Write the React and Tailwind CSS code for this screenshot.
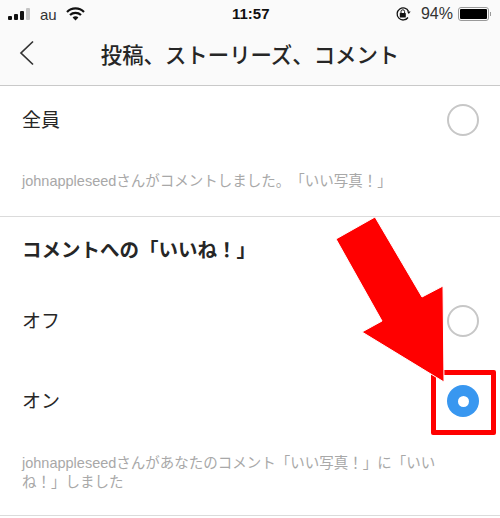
import React from 'react';

const jp = 'font-["Liberation_Sans","Noto_Sans_CJK_JP",sans-serif] [text-spacing-trim:space-all]';

function Radio({ checked }) {
  if (checked) {
    return (
      <div className="flex h-8 w-8 items-center justify-center rounded-full bg-[#3897f0]">
        <div className="h-[11px] w-[11px] rounded-full bg-white" />
      </div>
    );
  }
  return <div className="h-8 w-8 rounded-full border-2 border-[#c7c7c7]" />;
}

function Row({ label, checked, className }) {
  return (
    <div className={`flex items-center justify-between pl-[22px] pr-[21px] ${className}`}>
      <span className="pt-[2px] text-[19px] leading-[24px] text-[#262626]">{label}</span>
      <Radio checked={checked} />
    </div>
  );
}

function StatusBar() {
  return (
    <div className="relative flex h-[27px] items-center justify-between pl-2 pr-[9px] pt-[1px] text-[#111]">
      <div className="flex items-center">
        <div className="flex items-end gap-[2px]">
          <div className="h-[4px] w-[4px] rounded-[1px] bg-[#111]" />
          <div className="h-[6px] w-[4px] rounded-[1px] bg-[#111]" />
          <div className="h-[9px] w-[4px] rounded-[1px] bg-[#111]" />
          <div className="h-[12px] w-[4px] rounded-[1px] bg-[#c4c4c4]" />
        </div>
        <span className="ml-[10px] text-[15px] leading-none text-[#333]">au</span>
        <svg className="ml-[9px]" width="19" height="14" viewBox="0 0 19 14">
          <path d="M1 5 A12 12 0 0 1 18 5" fill="none" stroke="#111" strokeWidth="2.2" />
          <path d="M4 8 A8 8 0 0 1 15 8" fill="none" stroke="#111" strokeWidth="2.2" />
          <path d="M6.6 10.6 A4 4 0 0 1 12.4 10.6 L9.5 13.6 Z" fill="#111" />
        </svg>
      </div>
      <span className="absolute left-[232px] top-[5px] text-[15px] font-bold leading-[18px]">11:57</span>
      <div className="flex items-center">
        <svg width="16" height="16" viewBox="0 0 16 16">
          <path d="M13 11.5 A6 6 0 1 1 13.6 5.5" fill="none" stroke="#111" strokeWidth="1.3" />
          <path d="M12 5.5 L15.6 5.5 L13.8 8 Z" fill="#111" />
          <rect x="4.8" y="7" width="6" height="4.6" rx="0.6" fill="#111" />
          <path d="M6 7 V5.6 A1.8 1.8 0 0 1 9.6 5.6 V7" fill="none" stroke="#111" strokeWidth="1" />
        </svg>
        <span className="ml-[10px] text-[16px] leading-none text-[#333]">94%</span>
        <div className="ml-[5px] flex h-[14px] w-[31px] items-center rounded-[3px] border border-[#999] p-[1px]">
          <div className="h-full w-[27px] rounded-[1px] bg-black" />
        </div>
        <div className="ml-[1px] h-[4px] w-[1px] bg-[#999]" />
      </div>
    </div>
  );
}

export default function App() {
  return (
    <div className={`relative h-[518px] w-[500px] overflow-hidden bg-white ${jp}`}>
      <div className="border-b border-[#c9c9c9] bg-[#fafafa]">
        <StatusBar />
        <div className="relative flex h-[58px] items-center justify-center">
          <svg className="absolute left-[18px] top-[13px]" width="18" height="26" viewBox="0 0 18 26">
            <path d="M15 1.5 L3 13 L15 24.5" fill="none" stroke="#333" strokeWidth="1.7" />
          </svg>
          <h1 className="text-[21.4px] font-medium leading-[28px] text-[#262626]">投稿、ストーリーズ、コメント</h1>
        </div>
      </div>

      <div className="border-b border-[#dbdbdb]">
        <Row label="全員" className="pt-[18px]" />
        <p className="pl-[22px] pr-[20px] pt-[35px] pb-[25px] text-[14.5px] leading-[20px] text-[#a8a8a8]">
          johnappleseedさんがコメントしました。「いい写真！」
        </p>
      </div>

      <h2 className="pl-[22px] pt-[21px] text-[19.5px] font-bold leading-[25px] text-[#262626]">コメントへの「いいね！」</h2>
      <Row label="オフ" className="pt-[42px]" />
      <Row label="オン" checked className="pt-[48px]" />
      <div className="border-b border-[#dbdbdb] pb-[23px] pt-[37px]">
        <p className="pl-[22px] pr-[35px] text-[14.5px] leading-[19px] text-[#a8a8a8]">
          johnappleseedさんがあなたのコメント「いい写真！」に「いいね！」しました
        </p>
      </div>

      {/* red annotation over the screenshot */}
      <div className="absolute left-[431px] top-[370px] h-[65px] w-[65px] rounded-[2px] border-[5px] border-[#ff0000]" />
      <svg className="absolute left-0 top-0" width="500" height="518" viewBox="0 0 500 518">
        <path d="M375 217 L336 239 L382 321 L362 332 L444 382 L443 286 L422 297 Z" fill="#ff0000" stroke="#fff" strokeWidth="1" />
      </svg>
    </div>
  );
}
